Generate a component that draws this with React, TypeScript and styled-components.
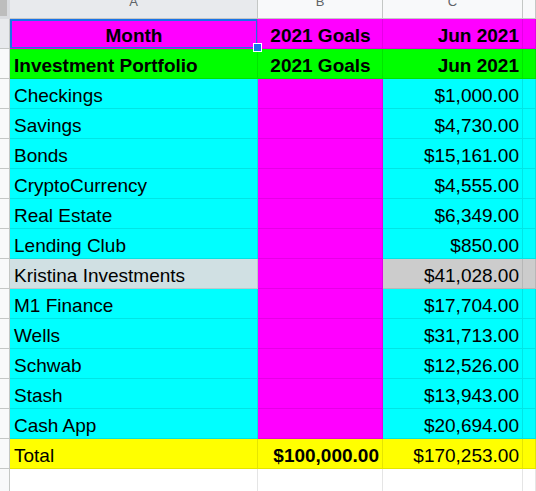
import styled, { createGlobalStyle } from 'styled-components';

const Global = createGlobalStyle`
  html, body {
    margin: 0;
    padding: 0;
    background: #ffffff;
    overflow: hidden;
  }
  body {
    font-family: "Liberation Sans", Arial, sans-serif;
  }
`;

const Sheet = styled.div`
  display: grid;
  grid-template-columns: 10px 248px 125px 140px 1fr;
  grid-template-rows: 19px repeat(15, 30px) 30px;
  width: 536px;
  height: 491px;
  overflow: hidden;
`;

const Corner = styled.div`
  background: #bdbdbd;
  border-right: 3px solid #dadce0;
  border-bottom: 3px solid #dadce0;
  box-sizing: border-box;
`;

const ColHead = styled.div<{ selected?: boolean }>`
  background: ${(p) => (p.selected ? '#e8eaed' : '#f8f9fa')};
  border-right: 1px solid #c4c7c5;
  border-bottom: 1px solid #c4c7c5;
  box-sizing: border-box;
  color: #5f6368;
  font-size: 13px;
  display: flex;
  justify-content: center;
  align-items: flex-end;
  padding-bottom: 9px;
  line-height: 15px;
  overflow: hidden;
`;

const RowHead = styled.div<{ selected?: boolean }>`
  background: ${(p) => (p.selected ? '#e8eaed' : '#f8f9fa')};
  border-right: 1px solid #c4c7c5;
  border-bottom: 1px solid #c4c7c5;
  box-sizing: border-box;
`;

type CellProps = {
  bg?: string,
  align?: 'left' | 'center' | 'right',
  bold?: boolean,
};

const Cell = styled.div<CellProps>`
  position: relative;
  background: ${(p) => p.bg || '#ffffff'};
  border-right: 1px solid rgba(0, 0, 0, 0.1);
  border-bottom: 1px solid rgba(0, 0, 0, 0.1);
  box-sizing: border-box;
  display: flex;
  align-items: flex-end;
  justify-content: ${(p) => (p.align === 'center' ? 'center' : p.align === 'right' ? 'flex-end' : 'flex-start')};
  padding: 0 3px 1px 4px;
  font-size: 19px;
  line-height: 22px;
  font-weight: ${(p) => (p.bold ? 700 : 400)};
  color: #000000;
  white-space: nowrap;
  overflow: hidden;
`;

const Selection = styled.div`
  position: absolute;
  left: 0;
  top: 0;
  right: -1px;
  bottom: -1px;
  border: 2px solid #1a73e8;
  pointer-events: none;
`;

const Handle = styled.div`
  position: absolute;
  left: 253px;
  top: 43px;
  width: 7px;
  height: 7px;
  background: #1a73e8;
  border: 1px solid #ffffff;
`;

const Wrap = styled.div`
  position: relative;
`;

const MAGENTA = '#ff00ff';
const GREEN = '#00ff00';
const CYAN = '#00ffff';
const YELLOW = '#ffff00';

const rows: [string, string][] = [
  ['Checkings', '$1,000.00'],
  ['Savings', '$4,730.00'],
  ['Bonds', '$15,161.00'],
  ['CryptoCurrency', '$4,555.00'],
  ['Real Estate', '$6,349.00'],
  ['Lending Club', '$850.00'],
  ['Kristina Investments', '$41,028.00'],
  ['M1 Finance', '$17,704.00'],
  ['Wells', '$31,713.00'],
  ['Schwab', '$12,526.00'],
  ['Stash', '$13,943.00'],
  ['Cash App', '$20,694.00'],
];

export default function App() {
  return (
    <Wrap>
      <Global />
      <Sheet>
        <Corner />
        <ColHead selected>A</ColHead>
        <ColHead>B</ColHead>
        <ColHead>C</ColHead>
        <ColHead />

        <RowHead selected />
        <Cell bg={MAGENTA} align="center" bold>
          Month
          <Selection />
        </Cell>
        <Cell bg={MAGENTA} align="center" bold>2021 Goals</Cell>
        <Cell bg={MAGENTA} align="right" bold>Jun 2021</Cell>
        <Cell bg={MAGENTA} />

        <RowHead />
        <Cell bg={GREEN} bold>Investment Portfolio</Cell>
        <Cell bg={GREEN} align="center" bold>2021 Goals</Cell>
        <Cell bg={GREEN} align="right" bold>Jun 2021</Cell>
        <Cell bg={GREEN} />

        {rows.map(([name, value]) => {
          const special = name === 'Kristina Investments';
          return [
            <RowHead key={name + 'h'} />,
            <Cell key={name + 'a'} bg={special ? '#d0e0e3' : CYAN}>{name}</Cell>,
            <Cell key={name + 'b'} bg={MAGENTA} />,
            <Cell key={name + 'c'} bg={special ? '#cccccc' : CYAN} align="right">{value}</Cell>,
            <Cell key={name + 'd'} bg={special ? '#cccccc' : CYAN} />,
          ];
        })}

        <RowHead />
        <Cell bg={YELLOW}>Total</Cell>
        <Cell bg={YELLOW} align="right" bold>$100,000.00</Cell>
        <Cell bg={YELLOW} align="right">$170,253.00</Cell>
        <Cell bg={YELLOW} />

        <RowHead />
        <Cell />
        <Cell />
        <Cell />
        <Cell />
      </Sheet>
      <Handle />
    </Wrap>
  );
}
